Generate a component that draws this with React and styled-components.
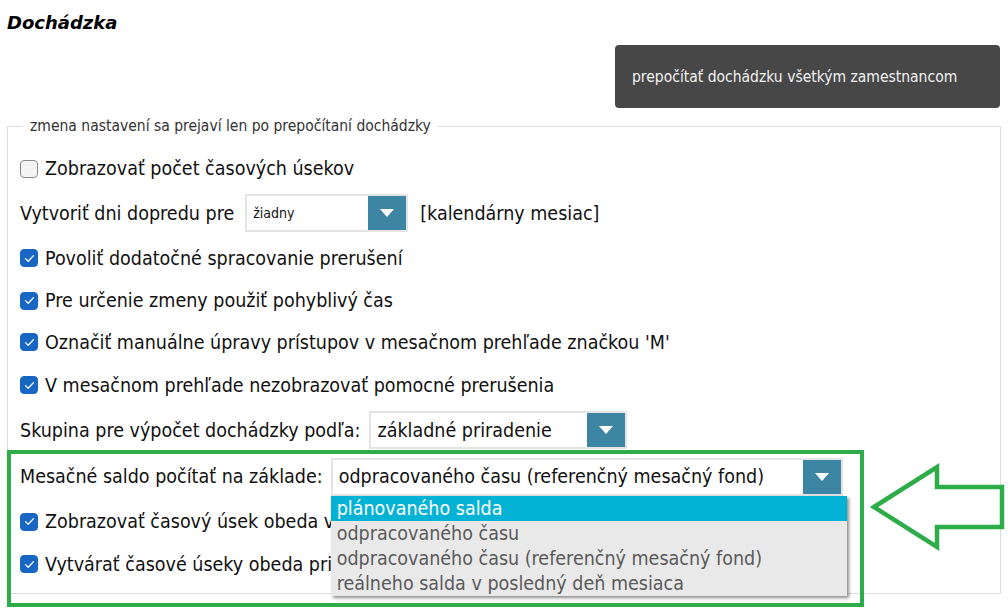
import React from 'react';
import styled, { createGlobalStyle } from 'styled-components';

const GlobalStyle = createGlobalStyle`
  body {
    margin: 0;
    background: #ffffff;
    font-family: 'DejaVu Sans Condensed', 'DejaVu Sans', sans-serif;
    font-stretch: condensed;
    color: #111;
  }
`;

const Page = styled.div`
  position: relative;
  width: 1008px;
  height: 609px;
  overflow: hidden;
  padding: 0 7px;
  box-sizing: border-box;
`;

const Title = styled.h1`
  margin: 0;
  padding-top: 12px;
  font-family: 'DejaVu Sans', sans-serif;
  font-stretch: normal;
  font-size: 18px;
  line-height: 22px;
  font-weight: bold;
  font-style: italic;
  color: #000;
`;

const ActionBar = styled.div`
  display: flex;
  justify-content: flex-end;
  margin-top: 11px;
  padding-right: 1px;
`;

const RecalcButton = styled.button`
  width: 385px;
  height: 63px;
  border: 0;
  border-radius: 4px;
  background: #474747;
  color: #f2f2f2;
  font-family: inherit;
  font-stretch: condensed;
  font-size: 15.5px;
  text-align: left;
  padding: 0 0 0 17px;
  cursor: pointer;
`;

const Settings = styled.fieldset`
  margin: 10px 0 0 0;
  padding: 12px 12px 8px 12px;
  border: 1px solid #dcdcdc;
  min-width: 0;
`;

const Legend = styled.legend`
  margin-left: 3px;
  padding: 0 7px;
  font-size: 15.5px;
  line-height: 17px;
  color: #333;
`;

const Row = styled.div`
  display: flex;
  align-items: center;
  gap: ${(p) => p.$gap || 7}px;
  height: ${(p) => p.$h || 42}px;
  font-size: 19.5px;
  white-space: nowrap;
`;

const Box = styled.span`
  flex: none;
  width: 18px;
  height: 18px;
  box-sizing: border-box;
  border-radius: 4px;
  display: flex;
  align-items: center;
  justify-content: center;
  background: ${(p) => (p.$checked ? '#1866c4' : '#f4f4f4')};
  border: 1px solid ${(p) => (p.$checked ? '#1866c4' : '#8a8a8a')};
`;

const SelectWrap = styled.div`
  position: relative;
  flex: none;
  display: flex;
  width: ${(p) => p.$width}px;
  height: 38px;
  box-sizing: border-box;
  border: 2px solid #e4e4e4;
  background: #fff;
  margin-left: 1px;
`;

const SelectValue = styled.div`
  flex: 1;
  display: flex;
  align-items: center;
  padding-left: 6px;
  font-size: ${(p) => p.$size || 19.5}px;
  color: #111;
  overflow: hidden;
`;

const Arrow = styled.div`
  flex: none;
  width: 38px;
  background: #3c86a3;
  display: flex;
  align-items: center;
  justify-content: center;
`;

const Suffix = styled.span`
  margin-left: 2px;
`;

const Options = styled.ul`
  position: absolute;
  top: 36px;
  left: -2px;
  width: 516px;
  margin: 0;
  padding: 0;
  list-style: none;
  background: #e9e9e9;
  box-shadow: 2px 2px 3px rgba(0, 0, 0, 0.45);
  z-index: 2;
`;

const Option = styled.li`
  height: 25px;
  line-height: 25px;
  padding-left: 6px;
  font-size: 19.5px;
  color: ${(p) => (p.$active ? '#ffffff' : '#5a5a5a')};
  background: ${(p) => (p.$active ? '#04b2d6' : 'transparent')};
`;

const Highlight = styled.div`
  position: absolute;
  left: 7px;
  top: 450px;
  width: 857px;
  height: 157px;
  box-sizing: border-box;
  border: 4px solid #2cad4a;
  pointer-events: none;
  z-index: 3;
`;

const Pointer = styled.svg`
  position: absolute;
  left: 866px;
  top: 460px;
  z-index: 3;
`;

const Check = ({ checked }) => (
  <Box $checked={checked}>
    {checked && (
      <svg width="11" height="9" viewBox="0 0 11 9">
        <path d="M1.5 4.6 L4.2 7.2 L9.5 1.6" fill="none" stroke="#fff" strokeWidth="1.3" strokeLinecap="round" strokeLinejoin="round" />
      </svg>
    )}
  </Box>
);

const Caret = () => (
  <svg width="14" height="8" viewBox="0 0 14 8">
    <path d="M0 0 L14 0 L7 8 Z" fill="#fff" />
  </svg>
);

const Select = ({ width, value, size, children }) => (
  <SelectWrap $width={width}>
    <SelectValue $size={size}>{value}</SelectValue>
    <Arrow>
      <Caret />
    </Arrow>
    {children}
  </SelectWrap>
);

const CheckRow = ({ checked, h, children }) => (
  <Row $h={h}>
    <Check checked={checked} />
    <span>{children}</span>
  </Row>
);

const options = [
  'plánovaného salda',
  'odpracovaného času',
  'odpracovaného času (referenčný mesačný fond)',
  'reálneho salda v posledný deň mesiaca',
];

export default function App() {
  return (
    <Page>
      <GlobalStyle />
      <Title>Dochádzka</Title>
      <ActionBar>
        <RecalcButton>prepočítať dochádzku všetkým zamestnancom</RecalcButton>
      </ActionBar>
      <Settings>
        <Legend>zmena nastavení sa prejaví len po prepočítaní dochádzky</Legend>
        <CheckRow checked={false} h={43}>Zobrazovať počet časových úsekov</CheckRow>
        <Row $h={46} $gap={10}>
          <span>Vytvoriť dni dopredu pre</span>
          <Select width={163} value="žiadny" size={14} />
          <Suffix>[kalendárny mesiac]</Suffix>
        </Row>
        <CheckRow checked h={44}>Povoliť dodatočné spracovanie prerušení</CheckRow>
        <CheckRow checked h={41}>Pre určenie zmeny použiť pohyblivý čas</CheckRow>
        <CheckRow checked>Označiť manuálne úpravy prístupov v mesačnom prehľade značkou 'M'</CheckRow>
        <CheckRow checked h={44}>V mesačnom prehľade nezobrazovať pomocné prerušenia</CheckRow>
        <Row $h={46} $gap={8}>
          <span>Skupina pre výpočet dochádzky podľa:</span>
          <Select width={258} value="základné priradenie" />
        </Row>
        <Row $h={47} $gap={7}>
          <span>Mesačné saldo počítať na základe:</span>
          <Select width={512} value="odpracovaného času (referenčný mesačný fond)">
            <Options>
              {options.map((o, i) => (
                <Option key={o} $active={i === 0}>{o}</Option>
              ))}
            </Options>
          </Select>
        </Row>
        <CheckRow checked h={43}>Zobrazovať časový úsek obeda v mesačnom prehľade</CheckRow>
        <CheckRow checked>Vytvárať časové úseky obeda pri prepočte dochádzky</CheckRow>
      </Settings>
      <Highlight />
      <Pointer width="142" height="100" viewBox="0 0 142 100">
        <path d="M8 47 L71 7 L71 27 L136 27 L136 67 L71 67 L71 87 Z" fill="none" stroke="#2cad4a" strokeWidth="4.5" strokeLinejoin="miter" />
      </Pointer>
    </Page>
  );
}
